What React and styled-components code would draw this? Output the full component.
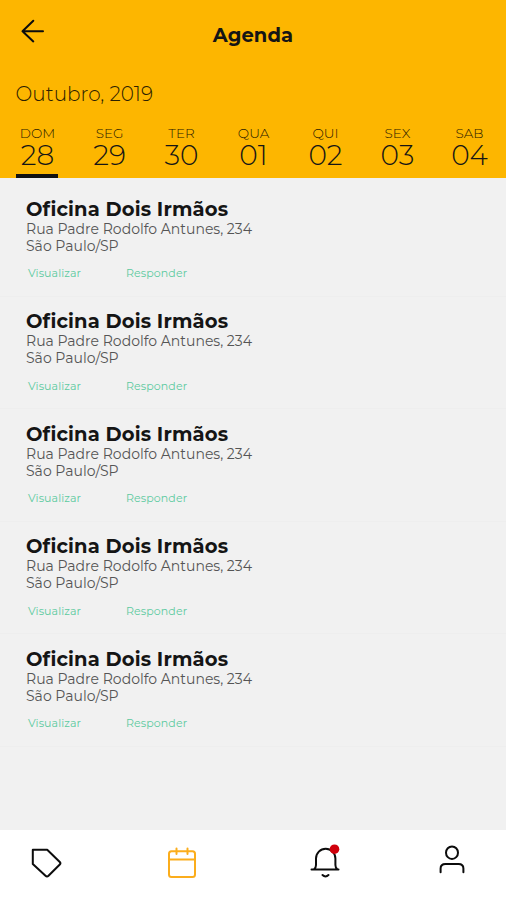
import styled, { createGlobalStyle } from "styled-components";

const GlobalStyle = createGlobalStyle`
  * {
    box-sizing: border-box;
  }
  body {
    margin: 0;
    font-family: Montserrat, Inter, "Liberation Sans", sans-serif;
    color: #151515;
  }
`;

const Container = styled.div`
  display: flex;
  flex-direction: column;
  height: 900px;
  width: 506px;
  overflow: hidden;
  background-color: #f1f1f1;
`;
const Header = styled.header`
  height: 178px;
  background-color: #fdb600;
  display: flex;
  flex-direction: column;
`;
const TopBar = styled.div`
  height: 69px;
  display: grid;
  grid-template-columns: 90px 1fr 90px;
  align-items: center;
`;
const BackButton = styled.button`
  width: 32px;
  height: 32px;
  margin: 0 0 7px 16px;
  padding: 0;
  border: none;
  background: none;
`;
const PageTitle = styled.h1`
  margin: 0;
  text-align: center;
  font-size: 19.5px;
  font-weight: 700;
  letter-spacing: 0.1px;
`;
const Month = styled.div`
  height: 50px;
  padding-left: 15.5px;
  line-height: 50px;
  font-size: 20px;
  font-weight: 300;
  letter-spacing: 0.02px;
  color: #2b2000;
`;
const Week = styled.div`
  flex: 1;
  display: grid;
  grid-template-columns: repeat(7, 72px);
  padding: 7px 0 0 1.5px;
`;
const Day = styled.div`
  display: flex;
  flex-direction: column;
  align-items: center;
`;
const DayName = styled.span`
  height: 15px;
  line-height: 15px;
  font-size: 13.5px;
  font-weight: 300;
  color: #2b2000;
`;
const DayNumber = styled.span`
  height: 29px;
  line-height: 29px;
  font-size: 28px;
  font-weight: 300;
`;
const Underline = styled.span`
  width: 42px;
  height: 4px;
  margin: 4px 1px 0 0;
  background-color: #111;
`;
const List = styled.main`
  flex: 1;
  padding-top: 6px;
`;
const Item = styled.article`
  height: 112.5px;
  padding: 12.5px 0 0 26px;
  border-bottom: 1px solid #eeeeee;
`;
const ItemTitle = styled.h2`
  margin: 0;
  height: 24px;
  line-height: 24px;
  font-size: 19.5px;
  font-weight: 700;
  letter-spacing: 0.15px;
`;
const Address = styled.p`
  margin: 0;
  height: 17px;
  line-height: 17px;
  font-size: 14px;
  font-weight: 400;
  letter-spacing: 0.01px;
  color: #555;
`;
const Actions = styled.div`
  display: grid;
  grid-template-columns: 98px 98px;
  padding: 11.5px 0 0 2px;
`;
const Action = styled.span`
  line-height: 15px;
  font-size: 11px;
  letter-spacing: 0.1px;
  color: #5ccaa0;
`;
const NavBar = styled.nav`
  height: 70px;
  display: grid;
  grid-template-columns: 136px 143px 127px 1fr;
  padding: 16px 0 0 30px;
  background-color: #fff;
`;
const Icon = styled.svg`
  display: block;
  width: 32px;
  height: 32px;
  overflow: visible;
  fill: none;
  stroke: ${(props) => props.$color || "#0c0c0c"};
  stroke-width: 2;
  stroke-linecap: round;
  stroke-linejoin: round;
`;

const days = [
  { name: "DOM", number: "28" },
  { name: "SEG", number: "29" },
  { name: "TER", number: "30" },
  { name: "QUA", number: "01" },
  { name: "QUI", number: "02" },
  { name: "SEX", number: "03" },
  { name: "SAB", number: "04" },
];

const visits = [1, 2, 3, 4, 5].map((id) => ({
  id,
  name: "Oficina Dois Irmãos",
  street: "Rua Padre Rodolfo Antunes, 234",
  city: "São Paulo/SP",
}));

const App = () => {
  return (
    <Container>
      <GlobalStyle />
      <Header>
        <TopBar>
          <BackButton aria-label="Voltar">
            <Icon viewBox="0 0 32 32">
              <path d="M17.3 5.8L6.5 16.2L17.3 26.4M6.5 16.2H27" />
            </Icon>
          </BackButton>
          <PageTitle>Agenda</PageTitle>
        </TopBar>
        <Month>Outubro, 2019</Month>
        <Week>
          {days.map((day, index) => (
            <Day key={day.name}>
              <DayName>{day.name}</DayName>
              <DayNumber>{day.number}</DayNumber>
              {index === 0 && <Underline />}
            </Day>
          ))}
        </Week>
      </Header>
      <List>
        {visits.map((visit) => (
          <Item key={visit.id}>
            <ItemTitle>{visit.name}</ItemTitle>
            <Address>{visit.street}</Address>
            <Address>{visit.city}</Address>
            <Actions>
              <Action>Visualizar</Action>
              <Action>Responder</Action>
            </Actions>
          </Item>
        ))}
      </List>
      <NavBar>
        <Icon viewBox="0 0 32 32">
          <path d="M2.8 3.7H17.2L29.8 16Q31 17.3 29.8 18.5L18.5 29.8Q17 31.2 15.5 29.8L2.8 18Z" />
        </Icon>
        <Icon viewBox="0 0 32 32" $color="#fbad1c">
          <rect x="3" y="5.2" width="26" height="25.8" rx="2.5" />
          <path d="M3 13.4H29M10.5 2.5V8M21.5 2.5V8" />
        </Icon>
        <Icon viewBox="0 0 32 32">
          <path d="M2.5 23.5H29.5M5 23.3Q7 22 7 19V12.5A9.7 9.7 0 0 1 26.4 12.5V19Q26.4 22 28.4 23.3M13.5 29Q16.5 32 19.5 29" />
          <circle cx="25.5" cy="3.2" r="4.8" fill="#d0000b" stroke="none" />
        </Icon>
        <Icon viewBox="0 0 32 32">
          <ellipse cx="16" cy="6.7" rx="6" ry="6.2" />
          <path d="M4.6 26.3V22.5Q4.6 18 9.5 18H22.5Q27.4 18 27.4 22.5V26.3" />
        </Icon>
      </NavBar>
    </Container>
  );
};
export default App;
